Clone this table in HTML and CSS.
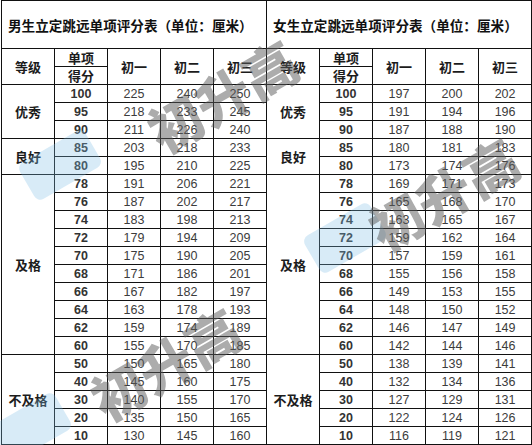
FILE: index.html
```html
<!DOCTYPE html>
<html lang="zh">
<head>
<meta charset="utf-8">
<title>立定跳远单项评分表</title>
<link rel="stylesheet" href="styles.css">
</head>
<body>
<div class="sheet">
<table class="score">
<colgroup>
<col class="c"><col class="c"><col class="c"><col class="c"><col class="c">
<col class="c"><col class="c"><col class="c"><col class="c"><col class="c">
</colgroup>
<thead>
<tr class="title-row">
<th colspan="5" class="title">男生立定跳远单项评分表（单位：厘米）</th>
<th colspan="5" class="title">女生立定跳远单项评分表（单位：厘米）</th>
</tr>
<tr class="row">
<th rowspan="2" class="hd">等级</th><th class="hd">单项</th><th rowspan="2" class="hd">初一</th><th rowspan="2" class="hd">初二</th><th rowspan="2" class="hd">初三</th>
<th rowspan="2" class="hd">等级</th><th class="hd">单项</th><th rowspan="2" class="hd">初一</th><th rowspan="2" class="hd">初二</th><th rowspan="2" class="hd">初三</th>
</tr>
<tr class="row">
<th class="hd">得分</th>
<th class="hd">得分</th>
</tr>
</thead>
<tbody>
<tr class="row"><th rowspan="3" class="lv">优秀</th><td class="pt">100</td><td>225</td><td>240</td><td>250</td><th rowspan="3" class="lv">优秀</th><td class="pt">100</td><td>197</td><td>200</td><td>202</td></tr>
<tr class="row"><td class="pt">95</td><td>218</td><td>233</td><td>245</td><td class="pt">95</td><td>191</td><td>194</td><td>196</td></tr>
<tr class="row"><td class="pt">90</td><td>211</td><td>226</td><td>240</td><td class="pt">90</td><td>187</td><td>188</td><td>190</td></tr>
<tr class="row"><th rowspan="2" class="lv">良好</th><td class="pt">85</td><td>203</td><td>218</td><td>233</td><th rowspan="2" class="lv">良好</th><td class="pt">85</td><td>180</td><td>181</td><td>183</td></tr>
<tr class="row"><td class="pt">80</td><td>195</td><td>210</td><td>225</td><td class="pt">80</td><td>173</td><td>174</td><td>176</td></tr>
<tr class="row"><th rowspan="10" class="lv">及格</th><td class="pt">78</td><td>191</td><td>206</td><td>221</td><th rowspan="10" class="lv">及格</th><td class="pt">78</td><td>169</td><td>171</td><td>173</td></tr>
<tr class="row"><td class="pt">76</td><td>187</td><td>202</td><td>217</td><td class="pt">76</td><td>165</td><td>168</td><td>170</td></tr>
<tr class="row"><td class="pt">74</td><td>183</td><td>198</td><td>213</td><td class="pt">74</td><td>163</td><td>165</td><td>167</td></tr>
<tr class="row"><td class="pt">72</td><td>179</td><td>194</td><td>209</td><td class="pt">72</td><td>159</td><td>162</td><td>164</td></tr>
<tr class="row"><td class="pt">70</td><td>175</td><td>190</td><td>205</td><td class="pt">70</td><td>157</td><td>159</td><td>161</td></tr>
<tr class="row"><td class="pt">68</td><td>171</td><td>186</td><td>201</td><td class="pt">68</td><td>155</td><td>156</td><td>158</td></tr>
<tr class="row"><td class="pt">66</td><td>167</td><td>182</td><td>197</td><td class="pt">66</td><td>149</td><td>153</td><td>155</td></tr>
<tr class="row"><td class="pt">64</td><td>163</td><td>178</td><td>193</td><td class="pt">64</td><td>148</td><td>150</td><td>152</td></tr>
<tr class="row"><td class="pt">62</td><td>159</td><td>174</td><td>189</td><td class="pt">62</td><td>146</td><td>147</td><td>149</td></tr>
<tr class="row"><td class="pt">60</td><td>155</td><td>170</td><td>185</td><td class="pt">60</td><td>142</td><td>144</td><td>146</td></tr>
<tr class="row"><th rowspan="5" class="lv">不及格</th><td class="pt">50</td><td>150</td><td>165</td><td>180</td><th rowspan="5" class="lv">不及格</th><td class="pt">50</td><td>138</td><td>139</td><td>141</td></tr>
<tr class="row"><td class="pt">40</td><td>145</td><td>160</td><td>175</td><td class="pt">40</td><td>132</td><td>134</td><td>136</td></tr>
<tr class="row"><td class="pt">30</td><td>140</td><td>155</td><td>170</td><td class="pt">30</td><td>127</td><td>129</td><td>131</td></tr>
<tr class="row"><td class="pt">20</td><td>135</td><td>150</td><td>165</td><td class="pt">20</td><td>122</td><td>124</td><td>126</td></tr>
<tr class="row"><td class="pt">10</td><td>130</td><td>145</td><td>160</td><td class="pt">10</td><td>116</td><td>119</td><td>121</td></tr>
</tbody>
</table>

<span class="badge badge-top"></span>
<span class="badge badge-right"></span>
<span class="badge badge-bottom"></span>
<span class="wm wm-top">初升高</span>
<span class="wm wm-right">初升高</span>
<span class="wm wm-bottom">初升高</span>
</div>
</body>
</html>
```

FILE: styles.css
```css
html, body {
  margin: 0;
  padding: 0;
  background: #ffffff;
}

.sheet {
  position: relative;
  width: 532px;
  height: 445px;
  overflow: hidden;
  padding-left: 1px;
  box-sizing: border-box;
}

.score {
  border-collapse: collapse;
  table-layout: fixed;
  width: 530px;
  font-family: "Liberation Sans", Arial, "Noto Sans CJK SC", sans-serif;
  font-size: 12.5px;
  color: #3c3c3c;
}

.score .c {
  width: 53px;
}

.score th,
.score td {
  border: 1px solid #111111;
  padding: 0;
  text-align: center;
  vertical-align: middle;
  line-height: 16px;
}

.title-row {
  height: 48px;
}

.row {
  height: 18px;
}

.title {
  text-align: left !important;
  padding-left: 6px !important;
  font-family: "Noto Sans CJK SC", sans-serif;
  font-weight: 700;
  font-size: 13.6px;
  color: #111111;
  white-space: nowrap;
}

.hd,
.lv {
  font-family: "Noto Sans CJK SC", sans-serif;
  font-weight: 700;
  font-size: 13px;
  color: #1c1c1c;
}

.pt {
  font-weight: 700;
  color: #333333;
}

/* watermark overlays */
.badge {
  position: absolute;
  width: 76px;
  height: 42px;
  border-radius: 7px;
  background: rgba(125, 190, 228, 0.3);
  transform: rotate(-30deg);
  pointer-events: none;
}

.badge-top { left: 22px; top: 144px; }
.badge-right { left: 307px; top: 217px; }
.badge-bottom { left: -8px; top: 407px; }

.wm {
  position: absolute;
  display: inline-block;
  font-family: "Noto Sans CJK SC", sans-serif;
  font-weight: 900;
  font-size: 54px;
  line-height: 1;
  color: rgba(90, 90, 90, 0.5);
  white-space: nowrap;
  transform: rotate(-30deg);
  pointer-events: none;
}

.wm-top { left: 141px; top: 68px; }
.wm-right { left: 362px; top: 166px; }
.wm-bottom { left: 84px; top: 336px; }
```
